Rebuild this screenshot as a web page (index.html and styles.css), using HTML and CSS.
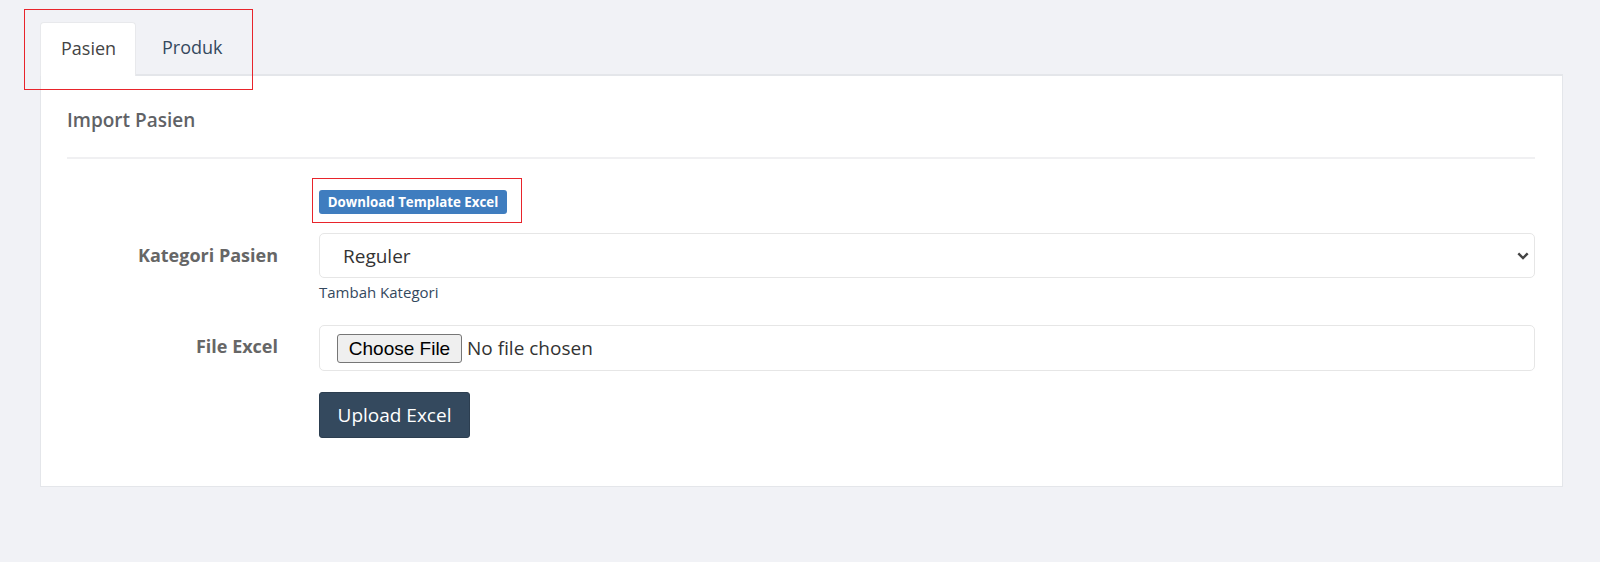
FILE: index.html
```html
<!DOCTYPE html>
<html lang="id">
<head>
<meta charset="utf-8">
<title>Import</title>
<link rel="stylesheet" href="styles.css">
</head>
<body>
<div class="page">
  <div class="tabs">
    <div class="tab active">Pasien</div>
    <div class="tab">Produk</div>
  </div>
  <div class="card">
    <h3 class="title">Import Pasien</h3>
    <div class="divider"></div>
    <div class="row row-download">
      <div class="label"></div>
      <div class="field"><button class="btn-download">Download Template Excel</button></div>
    </div>
    <div class="row row-select">
      <div class="label">Kategori Pasien</div>
      <div class="field">
        <div class="select">
          <span class="select-value">Reguler</span>
          <svg class="chevron" width="12" height="8" viewBox="0 0 12 8"><path d="M1.3 1.4 L6 6 L10.7 1.4" fill="none" stroke="#444" stroke-width="2.4"/></svg>
        </div>
        <div class="help">Tambah Kategori</div>
      </div>
    </div>
    <div class="row row-file">
      <div class="label">File Excel</div>
      <div class="field">
        <div class="file-box">
          <span class="choose">Choose File</span>
          <span class="nofile">No file chosen</span>
        </div>
      </div>
    </div>
    <div class="row row-upload">
      <div class="label"></div>
      <div class="field"><button class="btn-upload">Upload Excel</button></div>
    </div>
  </div>
  <div class="mark mark-tabs"></div>
  <div class="mark mark-download"></div>
</div>
</body>
</html>
```
FILE: styles.css
```css
html, body {
  margin: 0;
  padding: 0;
  background: #f1f2f6;
  font-family: "Open Sans", "Noto Sans", sans-serif;
}
.page {
  position: relative;
  padding: 22px 37px 0 40px;
  height: 540px;
}
.tabs {
  display: flex;
  height: 52px;
  position: relative;
  z-index: 2;
}
.tab {
  height: 52px;
  line-height: 50px;
  font-size: 18px;
  color: #34495e;
  padding: 0 21px;
  margin-right: 5px;
  box-sizing: border-box;
}
.tab.active {
  background: #fff;
  color: #444;
  border: 1px solid #e8e9ec;
  border-bottom: none;
  border-radius: 4px 4px 0 0;
  height: 54px;
  width: 96px;
  padding: 0 20px;
}
.card {
  background: #fff;
  border: 1px solid #e4e6ea;
  border-top: 2px solid #e4e6ea;
  padding: 32px 27px 48px 26px;
  margin-top: 0;
}
.title {
  margin: 0;
  font-size: 19px;
  font-weight: 600;
  line-height: 25px;
  height: 25px;
  color: #606266;
}
.divider {
  margin-top: 24px;
  border-top: 2px solid #f0f0f2;
}
.row {
  display: grid;
  grid-template-columns: 211px 1fr;
  column-gap: 41px;
}
.label {
  text-align: right;
  font-size: 18px;
  font-weight: 700;
  color: #666;
}
.row-download { margin-top: 31px; }
.btn-download {
  height: 24px;
  width: 188px;
  border: none;
  border-radius: 3px;
  background: #3f7dbf;
  color: #fff;
  font-family: "Open Sans", sans-serif;
  font-weight: 700;
  font-size: 13.3px;
  padding: 0;
  display: block;
}
.row-select { margin-top: 19px; }
.row-select .label { line-height: 44px; }
.select {
  height: 45px;
  box-sizing: border-box;
  border: 1px solid #e6e6e6;
  border-radius: 5px;
  display: flex;
  align-items: center;
  justify-content: space-between;
  padding: 0 5px 0 23px;
}
.select-value {
  font-size: 19px;
  color: #333;
}
.chevron { display: block; }
.help {
  margin-top: 5px;
  font-size: 15px;
  line-height: 18px;
  color: #34495e;
}
.row-file { margin-top: 24px; }
.row-file .label { line-height: 42px; }
.file-box {
  height: 46px;
  box-sizing: border-box;
  border: 1px solid #e6e6e6;
  border-radius: 5px;
  display: flex;
  align-items: center;
  padding: 0 0 0 17px;
}
.choose {
  display: inline-block;
  height: 29px;
  line-height: 27px;
  box-sizing: border-box;
  width: 125px;
  text-align: center;
  border: 1px solid #767676;
  border-radius: 3px;
  background: #efefef;
  font-family: "Liberation Sans", Arial, sans-serif;
  font-size: 19px;
  color: #000;
  margin-top: 1px;
}
.nofile {
  margin-left: 5px;
  font-size: 19px;
  color: #333;
}
.row-upload { margin-top: 21px; }
.btn-upload {
  display: block;
  width: 151px;
  height: 46px;
  border: 1px solid #2c3e50;
  border-radius: 3px;
  background: #34495e;
  color: #fff;
  font-family: "Open Sans", sans-serif;
  font-size: 19px;
  padding: 0;
}
.mark {
  position: absolute;
  border: 1px solid #e8242b;
  box-sizing: border-box;
  z-index: 5;
}
.mark-tabs { left: 24px; top: 9px; width: 229px; height: 81px; }
.mark-download { left: 312px; top: 178px; width: 210px; height: 45px; }
```
